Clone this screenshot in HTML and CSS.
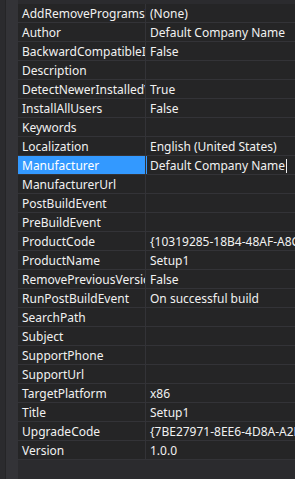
FILE: index.html
```html
<!DOCTYPE html>
<html lang="en">
  <head>
    <meta charset="UTF-8" />
    <title>Properties</title>
    <link rel="stylesheet" href="styles.css">
  </head>
  <body>
    <div class="grid">
      <div class="gutter"></div>
      <div class="props" id="props"></div>
    </div>

    <script>
      const props = [
        ["AddRemoveProgramsIcon", "(None)"],
        ["Author", "Default Company Name"],
        ["BackwardCompatibleIDGeneration", "False"],
        ["Description", ""],
        ["DetectNewerInstalledVersion", "True"],
        ["InstallAllUsers", "False"],
        ["Keywords", ""],
        ["Localization", "English (United States)"],
        ["Manufacturer", "Default Company Name"],
        ["ManufacturerUrl", ""],
        ["PostBuildEvent", ""],
        ["PreBuildEvent", ""],
        ["ProductCode", "{10319285-18B4-48AF-A8C5-3E1F2D1B7A40}"],
        ["ProductName", "Setup1"],
        ["RemovePreviousVersions", "False"],
        ["RunPostBuildEvent", "On successful build"],
        ["SearchPath", ""],
        ["Subject", ""],
        ["SupportPhone", ""],
        ["SupportUrl", ""],
        ["TargetPlatform", "x86"],
        ["Title", "Setup1"],
        ["UpgradeCode", "{7BE27971-8EE6-4D8A-A2B4-6C1E0F9D3B55}"],
        ["Version", "1.0.0"],
      ];

      const list = document.getElementById("props");
      for (let [name, value] of props) {
        let row = document.createElement("div");
        row.classList.add("row");
        if (name === "Manufacturer") row.classList.add("selected");

        let nameCell = document.createElement("div");
        nameCell.classList.add("name");
        nameCell.textContent = name;

        let valueCell = document.createElement("div");
        valueCell.classList.add("value");
        valueCell.textContent = value;
        if (name === "Manufacturer") {
          let caret = document.createElement("span");
          caret.classList.add("caret");
          valueCell.appendChild(caret);
        }

        row.appendChild(nameCell);
        row.appendChild(valueCell);
        list.appendChild(row);
      }
    </script>
  </body>
</html>
```

FILE: styles.css
```css
body {
  margin: 0;
  background-color: #2b2b2e;
  font-family: "Noto Sans", "Noto Sans CJK TC", sans-serif;
  font-size: 12px;
  color: #f1f1f1;
  height: 479px;
  overflow: hidden;
}

.grid {
  display: flex;
  padding-top: 4px;
  height: 475px;
}

.gutter {
  width: 12px;
  margin-left: 5px;
  margin-top: -4px;
  border-left: 1px solid #252527;
  background-color: #333337;
}

.props {
  flex: 1;
  overflow: hidden;
}

.row {
  display: flex;
  height: 19px;
  background-color: #252526;
  border-bottom: 1px solid #333337;
  box-sizing: border-box;
  white-space: nowrap;
}

.name {
  width: 128px;
  padding: 1px 0 0 4px;
  box-sizing: border-box;
  overflow: hidden;
  line-height: 17px;
  border-right: 1px solid #333337;
}

.value {
  flex: 1;
  padding: 1px 0 0 3px;
  overflow: hidden;
  line-height: 17px;
  border-left: 1px solid transparent;
}

.selected .name {
  background-color: #3399ff;
  color: #ffffff;
}

.selected .value {
  border-left-color: #3399ff;
}

.caret {
  display: inline-block;
  width: 1px;
  height: 14px;
  margin-left: 1px;
  vertical-align: -3px;
  background-color: #f1f1f1;
}
```
